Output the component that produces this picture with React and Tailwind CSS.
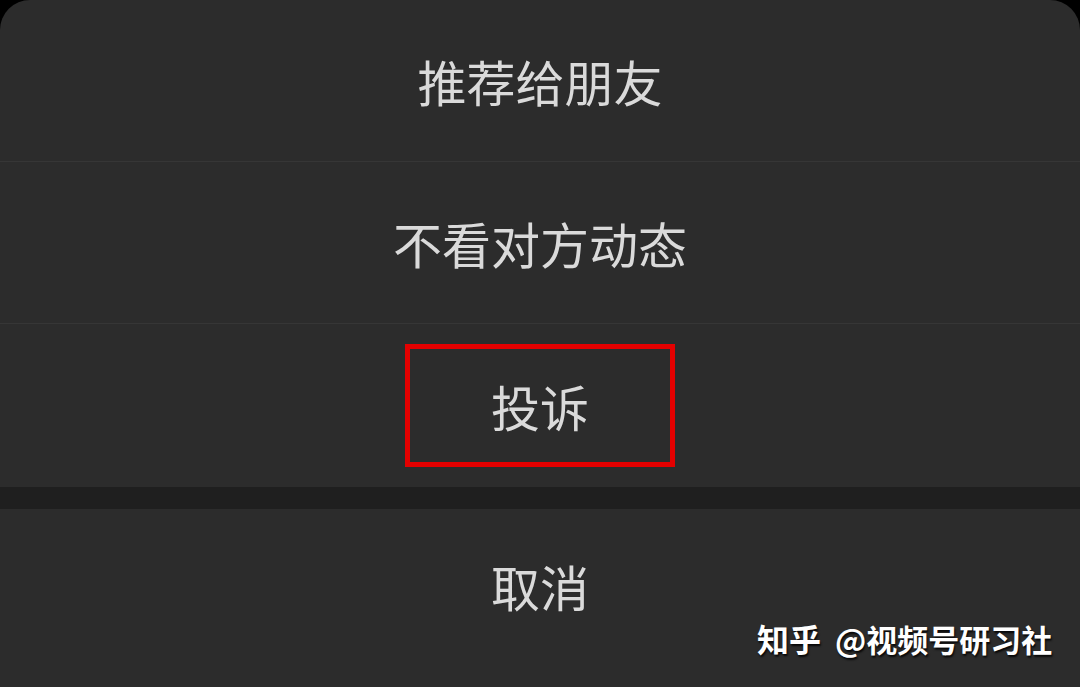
export default function App() {
  const font = { fontFamily: '"Noto Sans CJK SC", "Noto Sans", sans-serif' };
  return (
    <div className="relative w-[1080px] h-[687px] overflow-hidden bg-black" style={font}>
      <div className="flex flex-col h-full bg-[#2c2c2c] rounded-t-[30px]">
        <div className="h-[162px] shrink-0 flex items-center justify-center border-b border-[#363636] text-[49px] leading-none text-[#dadada]">
          推荐给朋友
        </div>
        <div className="h-[162px] shrink-0 flex items-center justify-center border-b border-[#363636] text-[49px] leading-none text-[#dadada]">
          不看对方动态
        </div>
        <div className="h-[163px] shrink-0 flex items-center justify-center text-[49px] leading-none text-[#dadada]">
          <div className="w-[270px] h-[123px] border-[5px] border-[#e40000] flex items-center justify-center">
            投诉
          </div>
        </div>
        <div className="h-[22px] shrink-0 bg-[#1f1f1f]" />
        <div className="flex-1 flex justify-center pt-[52px] text-[49px] leading-none text-[#dadada]">
          取消
        </div>
      </div>
      <div className="absolute left-[757px] top-[622px] flex items-center leading-none text-white whitespace-nowrap [text-shadow:1px_2px_2px_rgba(0,0,0,0.85)]">
        <span className="text-[32px] font-bold">知乎</span>
        <span className="ml-[14px] text-[31px] font-semibold">@视频号研习社</span>
      </div>
    </div>
  );
}
